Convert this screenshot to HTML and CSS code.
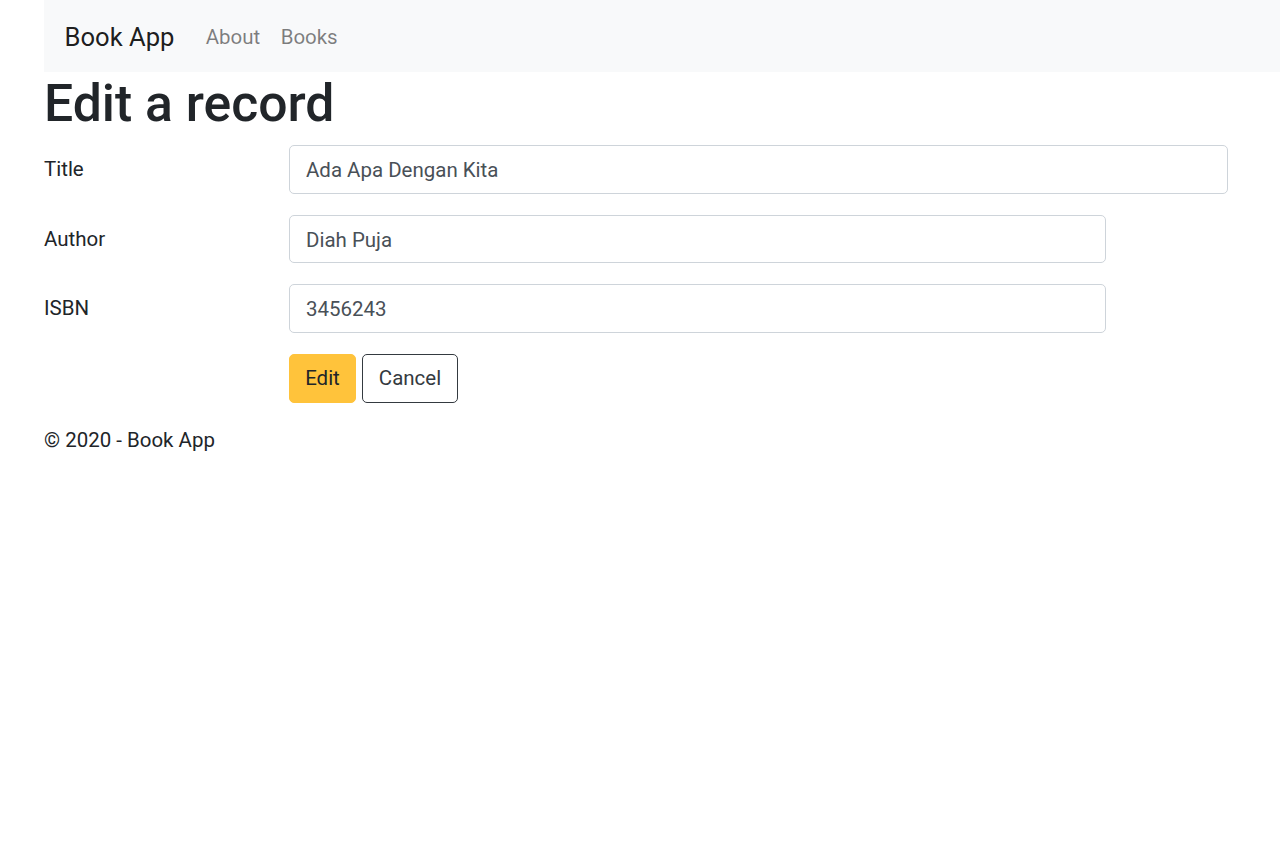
FILE: index.html
```html
<!DOCTYPE html>
<html lang="en">
<head>
<meta charset="utf-8">
<title>Edit a record - Book App</title>
<link rel="stylesheet" href="styles.css">
</head>
<body>
<div class="page">
  <nav class="navbar">
    <a class="brand" href="#">Book App</a>
    <a class="nav-link" href="#">About</a>
    <a class="nav-link" href="#">Books</a>
  </nav>
  <h1 class="heading">Edit a record</h1>
  <form class="form">
    <div class="form-row">
      <label class="form-label" for="title">Title</label>
      <input class="form-input wide" id="title" type="text" value="Ada Apa Dengan Kita">
    </div>
    <div class="form-row">
      <label class="form-label" for="author">Author</label>
      <input class="form-input" id="author" type="text" value="Diah Puja">
    </div>
    <div class="form-row">
      <label class="form-label" for="isbn">ISBN</label>
      <input class="form-input" id="isbn" type="text" value="3456243">
    </div>
    <div class="form-row actions">
      <span class="form-label"></span>
      <button class="btn btn-warning" type="button">Edit</button>
      <button class="btn btn-outline" type="button">Cancel</button>
    </div>
  </form>
  <footer class="footer">© 2020 - Book App</footer>
</div>
</body>
</html>
```

FILE: styles.css
```css
* { box-sizing: border-box; }
html, body {
  margin: 0;
  padding: 0;
  background: #fff;
}
body {
  font-family: Roboto, "Liberation Sans", sans-serif;
  font-size: 20.48px;
  line-height: 1.5;
  color: #212529;
}
.page {
  padding-left: 44px;
}
.navbar {
  display: flex;
  align-items: center;
  height: 72px;
  background: #f8f9fa;
  padding: 2px 20.5px 0;
}
.brand {
  font-size: 25.6px;
  color: rgba(0, 0, 0, 0.9);
  text-decoration: none;
  margin-right: 21px;
}
.nav-link {
  color: rgba(0, 0, 0, 0.5);
  text-decoration: none;
  padding: 0 10.24px;
  font-size: 20.48px;
}
.heading {
  margin: 1px 0 10px;
  font-size: 51.7px;
  font-weight: 500;
  line-height: 1.2;
}
.form-row {
  display: flex;
  align-items: flex-start;
  margin-bottom: 21px;
}
.form-label {
  width: 245px;
  flex: none;
  padding-top: 9px;
  line-height: 30px;
}
.form-input {
  width: 817px;
  height: 48.5px;
  padding: 2px 16px 0;
  border: 1px solid #ced4da;
  border-radius: 5px;
  font-family: inherit;
  font-size: 20.48px;
  color: #495057;
  background: #fff;
}
.form-input.wide {
  width: 939px;
}
.actions {
  gap: 6px;
  margin-bottom: 22px;
}
.actions .form-label {
  width: 239px;
}
.btn {
  height: 49px;
  padding: 0 14px;
  font-family: inherit;
  font-size: 20.48px;
  border-radius: 5px;
  border: 1px solid transparent;
  color: #212529;
  cursor: pointer;
}
.btn-warning {
  background: #ffc33b;
  border-color: #ffc33b;
  width: 67px;
}
.btn-outline {
  background: #fff;
  border-color: #343a40;
  color: #343a40;
  width: 96px;
}
.footer {
  line-height: 30px;
}
```
